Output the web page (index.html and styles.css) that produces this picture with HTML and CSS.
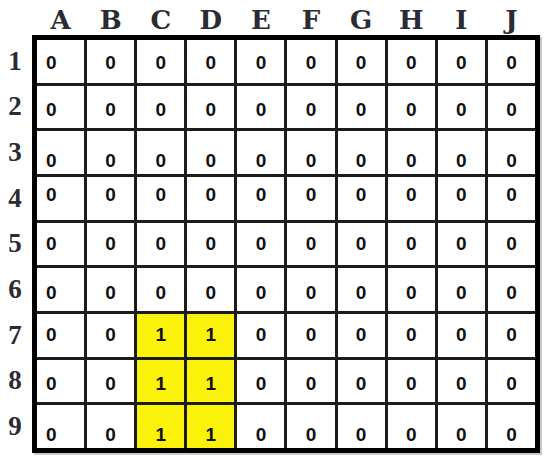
FILE: index.html
```html
<!DOCTYPE html>
<html>
<head>
<meta charset="utf-8">
<link rel="stylesheet" href="styles.css">
</head>
<body>
<div class="sheet">
  <div class="corner"></div>
  <div class="col-heads">
    <span>A</span><span>B</span><span>C</span><span>D</span><span>E</span><span>F</span><span>G</span><span>H</span><span>I</span><span>J</span>
  </div>
  <div class="row-heads">
    <span>1</span><span>2</span><span>3</span><span>4</span><span>5</span><span>6</span><span>7</span><span>8</span><span>9</span>
  </div>
  <div class="board">
    <div class="row r1"><div class="cell">0</div><div class="cell">0</div><div class="cell">0</div><div class="cell">0</div><div class="cell">0</div><div class="cell">0</div><div class="cell">0</div><div class="cell">0</div><div class="cell">0</div><div class="cell">0</div></div>
    <div class="row r2"><div class="cell">0</div><div class="cell">0</div><div class="cell">0</div><div class="cell">0</div><div class="cell">0</div><div class="cell">0</div><div class="cell">0</div><div class="cell">0</div><div class="cell">0</div><div class="cell">0</div></div>
    <div class="row bottom"><div class="cell">0</div><div class="cell">0</div><div class="cell">0</div><div class="cell">0</div><div class="cell">0</div><div class="cell">0</div><div class="cell">0</div><div class="cell">0</div><div class="cell">0</div><div class="cell">0</div></div>
    <div class="row top"><div class="cell">0</div><div class="cell">0</div><div class="cell">0</div><div class="cell">0</div><div class="cell">0</div><div class="cell">0</div><div class="cell">0</div><div class="cell">0</div><div class="cell">0</div><div class="cell">0</div></div>
    <div class="row"><div class="cell">0</div><div class="cell">0</div><div class="cell">0</div><div class="cell">0</div><div class="cell">0</div><div class="cell">0</div><div class="cell">0</div><div class="cell">0</div><div class="cell">0</div><div class="cell">0</div></div>
    <div class="row r2"><div class="cell">0</div><div class="cell">0</div><div class="cell">0</div><div class="cell">0</div><div class="cell">0</div><div class="cell">0</div><div class="cell">0</div><div class="cell">0</div><div class="cell">0</div><div class="cell">0</div></div>
    <div class="row"><div class="cell">0</div><div class="cell">0</div><div class="cell hit">1</div><div class="cell hit">1</div><div class="cell">0</div><div class="cell">0</div><div class="cell">0</div><div class="cell">0</div><div class="cell">0</div><div class="cell">0</div></div>
    <div class="row r2"><div class="cell">0</div><div class="cell">0</div><div class="cell hit">1</div><div class="cell hit">1</div><div class="cell">0</div><div class="cell">0</div><div class="cell">0</div><div class="cell">0</div><div class="cell">0</div><div class="cell">0</div></div>
    <div class="row bottom"><div class="cell">0</div><div class="cell">0</div><div class="cell hit">1</div><div class="cell hit">1</div><div class="cell">0</div><div class="cell">0</div><div class="cell">0</div><div class="cell">0</div><div class="cell">0</div><div class="cell">0</div></div>
  </div>
</div>
</body>
</html>
```

FILE: styles.css
```css
html, body {
  margin: 0;
  padding: 0;
  background: #ffffff;
}

.sheet {
  width: 550px;
  height: 462px;
  display: grid;
  grid-template-columns: 32px 508px;
  grid-template-rows: 35px 418px;
}

.col-heads {
  display: grid;
  grid-template-columns: repeat(10, 1fr);
  column-gap: 3px;
  padding: 0 5px;
  align-items: end;
  font-family: "DejaVu Serif", serif;
  font-weight: bold;
  font-size: 26px;
  line-height: 1;
  color: #2b2b33;
}

.col-heads span {
  text-align: center;
  padding-bottom: 2px;
}

.row-heads {
  display: grid;
  grid-template-rows: repeat(9, 1fr);
  row-gap: 3px;
  padding: 5px 0;
  font-family: "Liberation Serif", serif;
  font-weight: bold;
  font-size: 27px;
  line-height: 1;
  color: #2b2b33;
}

.row-heads span {
  display: flex;
  align-items: center;
  justify-content: center;
  padding-right: 2px;
}

.board {
  border: 5px solid #000;
  background: #1c1c1c;
  display: grid;
  grid-template-columns: repeat(10, 1fr);
  grid-template-rows: repeat(9, 1fr);
  gap: 3px;
  box-shadow: 2px 2px 0 #c8c8c8;
}

.row {
  display: contents;
}

.cell {
  background: #ffffff;
  display: flex;
  align-items: center;
  justify-content: center;
  font-family: "Liberation Sans", Arial, sans-serif;
  font-weight: bold;
  font-size: 19px;
  line-height: 18px;
  color: #111;
}

.row .cell:first-child {
  justify-content: flex-start;
  padding-left: 9px;
}

.row.r1 .cell {
  padding-top: 4px;
}

.row.r2 .cell {
  padding-top: 6px;
}

.row.bottom .cell {
  align-items: flex-end;
  padding-bottom: 4px;
}

.row.top .cell {
  align-items: flex-start;
  padding-top: 9px;
}

.cell.hit {
  background: #fbf20c;
}
```
